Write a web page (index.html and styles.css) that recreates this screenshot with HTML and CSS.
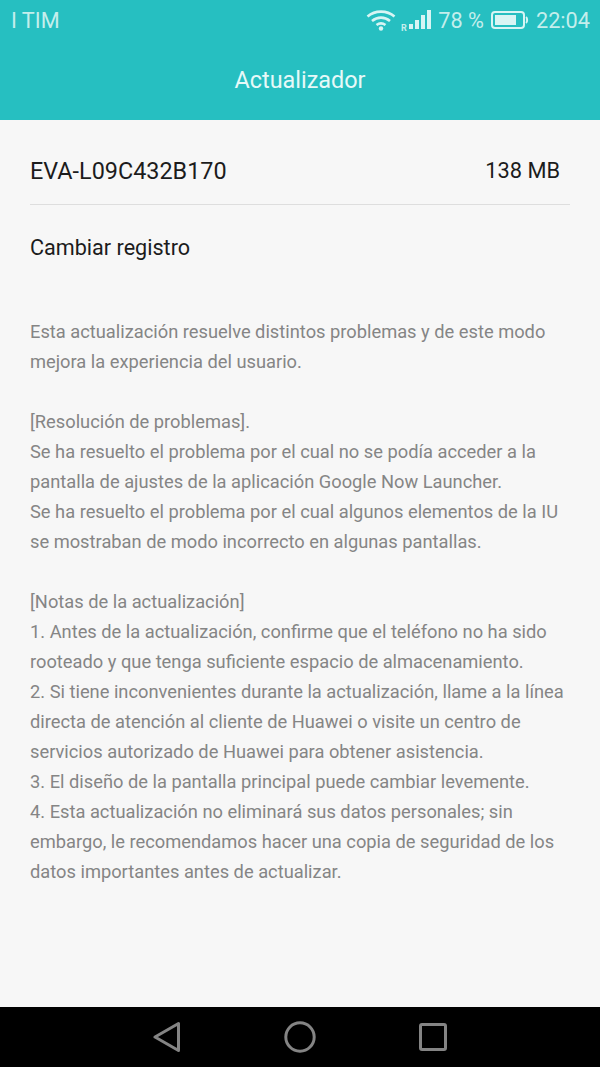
FILE: index.html
```html
<!DOCTYPE html>
<html lang="es">
<head>
    <meta charset="UTF-8">
    <meta name="viewport" content="width=device-width, initial-scale=1.0">
    <title>Actualizador</title>
    <link rel="stylesheet" href="styles.css">
</head>
<body>
    <div class="phone">
        <div class="header">
            <div class="status-bar">
                <span class="carrier">I TIM</span>
                <div class="status-right">
                    <svg class="wifi" width="30" height="22" viewBox="0 0 30 22">
                        <path d="M1.5 7.5C9 1 21 1 28.5 7.5" />
                        <path d="M6 12C11.5 7.5 18.5 7.5 24 12" />
                        <path d="M10.5 16C13.5 13.8 16.5 13.8 19.5 16" />
                        <circle cx="15" cy="19.5" r="2.2" />
                    </svg>
                    <svg class="signal" width="34" height="24" viewBox="0 0 34 24">
                        <text x="0" y="22.5" class="roaming">R</text>
                        <rect x="8" y="16" width="4" height="5" />
                        <rect x="14" y="12" width="4" height="9" />
                        <rect x="20" y="7" width="4" height="14" />
                        <rect x="26" y="2" width="4" height="19" />
                    </svg>
                    <span class="battery-text">78 %</span>
                    <svg class="battery" width="38" height="20" viewBox="0 0 38 20">
                        <rect x="1" y="2" width="32" height="16" rx="3" class="battery-shell" />
                        <rect x="4" y="5" width="21" height="10" class="battery-level" />
                        <path d="M35 7C36.5 8 36.5 12 35 13" class="battery-tip" />
                    </svg>
                    <span class="clock">22:04</span>
                </div>
            </div>
            <div class="title-bar">Actualizador</div>
        </div>

        <div class="content">
            <div class="version-row">
                <span class="version-name">EVA-L09C432B170</span>
                <span class="version-size">138 MB</span>
            </div>
            <h2 class="changelog-title">Cambiar registro</h2>
            <div class="changelog">
                <p>Esta actualización resuelve distintos problemas y de este modo<br>mejora la experiencia del usuario.</p>
                <p>[Resolución de problemas].<br>
                Se ha resuelto el problema por el cual no se podía acceder a la<br>
                pantalla de ajustes de la aplicación Google Now Launcher.<br>
                Se ha resuelto el problema por el cual algunos elementos de la IU<br>
                se mostraban de modo incorrecto en algunas pantallas.</p>
                <p>[Notas de la actualización]<br>
                1. Antes de la actualización, confirme que el teléfono no ha sido<br>
                rooteado y que tenga suficiente espacio de almacenamiento.<br>
                2. Si tiene inconvenientes durante la actualización, llame a la línea<br>
                directa de atención al cliente de Huawei o visite un centro de<br>
                servicios autorizado de Huawei para obtener asistencia.<br>
                3. El diseño de la pantalla principal puede cambiar levemente.<br>
                4. Esta actualización no eliminará sus datos personales; sin<br>
                embargo, le recomendamos hacer una copia de seguridad de los<br>
                datos importantes antes de actualizar.</p>
            </div>
        </div>

        <div class="nav-bar">
            <svg width="28" height="32" viewBox="0 0 28 32">
                <path d="M25.5 2.5V29.5L2 16Z" />
            </svg>
            <svg width="32" height="32" viewBox="0 0 32 32">
                <circle cx="16" cy="16" r="14.2" />
            </svg>
            <svg width="28" height="28" viewBox="0 0 28 28">
                <rect x="1.5" y="1.5" width="25" height="25" rx="1.5" />
            </svg>
        </div>
    </div>
</body>
</html>
```

FILE: styles.css
```css
* {
    box-sizing: border-box;
    margin: 0;
    padding: 0;
}

body {
    font-family: Roboto, "Liberation Sans", sans-serif;
    background-color: #f7f7f7;
}

.phone {
    width: 600px;
    height: 1067px;
    display: flex;
    flex-direction: column;
    overflow: hidden;
}

.header {
    height: 120px;
    background-color: #26bfc1;
    color: #d8f5f4;
    flex-shrink: 0;
}

.status-bar {
    height: 40px;
    display: flex;
    align-items: center;
    justify-content: space-between;
    padding: 0 10px 0 11px;
    font-size: 21.7px;
    color: #c4eeec;
}

.status-right {
    display: flex;
    align-items: center;
}

.wifi {
    margin-right: 5px;
}

.wifi path {
    fill: none;
    stroke: #d8f5f4;
    stroke-width: 2.6;
}

.wifi circle {
    fill: #d8f5f4;
}

.signal {
    margin-right: 3px;
}

.signal rect {
    fill: #d8f5f4;
}

.roaming {
    font-size: 9px;
    font-weight: 700;
    fill: #c4eeec;
}

.battery {
    margin: 0 7px 0 7px;
}

.battery-shell {
    fill: none;
    stroke: #d8f5f4;
    stroke-width: 2;
}

.battery-level {
    fill: #d8f5f4;
}

.battery-tip {
    fill: none;
    stroke: #d8f5f4;
    stroke-width: 2;
}

.title-bar {
    height: 80px;
    display: flex;
    align-items: center;
    justify-content: center;
    font-size: 23.4px;
    color: #e6f9f8;
}

.content {
    flex: 1;
    padding: 0 30px;
}

.version-row {
    height: 85px;
    display: flex;
    align-items: center;
    justify-content: space-between;
    padding: 17px 10px 0 0;
    border-bottom: 1px solid #dedede;
    font-size: 23.4px;
    color: #1c1c1c;
}

.version-size {
    font-size: 21.8px;
}

.changelog-title {
    font-size: 21.6px;
    font-weight: 400;
    color: #1c1c1c;
    margin-top: 30px;
    line-height: 26px;
}

.changelog {
    margin-top: 56px;
    font-size: 18.3px;
    line-height: 30px;
    color: #858585;
}

.changelog p {
    margin-bottom: 30px;
    white-space: nowrap;
}

.nav-bar {
    height: 60px;
    background-color: #000;
    flex-shrink: 0;
    display: flex;
    align-items: center;
    padding-left: 153px;
}

.nav-bar svg {
    fill: none;
    stroke: #848484;
    stroke-width: 3;
    stroke-linejoin: round;
}

.nav-bar svg:nth-child(1),
.nav-bar svg:nth-child(2) {
    margin-right: 103px;
}
```
